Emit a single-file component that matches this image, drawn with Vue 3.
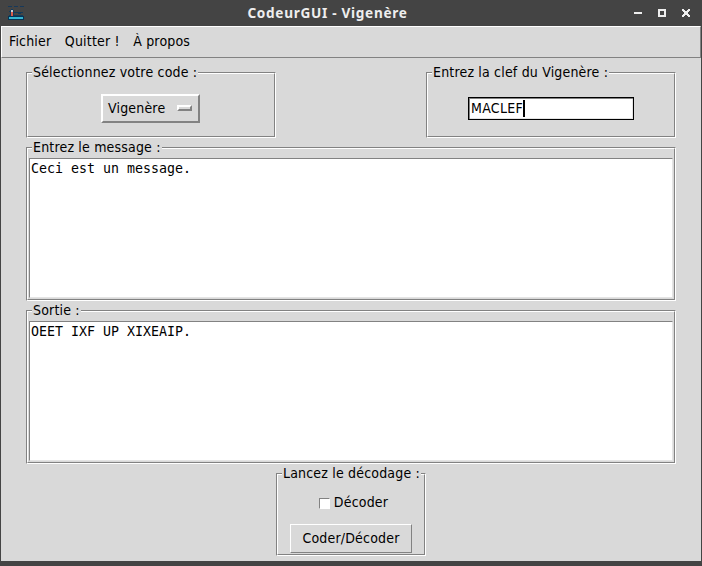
<script setup>
import { ref } from 'vue'

const menus = ['Fichier', 'Quitter !', 'À propos']
const code = ref('Vigenère')
const cipherKey = ref('MACLEF')
const message = ref('Ceci est un message.')
const output = ref('OEET IXF UP XIXEAIP.')
</script>

<template>
  <div class="window">
    <header class="titlebar">
      <svg class="logo" width="16" height="16" viewBox="0 0 16 16" shape-rendering="crispEdges">
        <path d="M0 1h4v1H0zM6 1h4v1H6zM12 1h4v1h-4z" fill="#17395a" />
        <path d="M1 6h2v1H1zM5 7h10v1H5zM10 8h3v1h-3zM1 10h14v1H1z" fill="#143a59" />
        <path d="M2 5h1v7H2zM5 5h1v7H5zM3 4h2v1H3z" fill="#123a5d" />
        <path d="M3 5h2v2H3z" fill="#c9d2d9" />
        <path d="M3 7h2v4H3z" fill="#d95b4a" />
        <path d="M0 11h16v4H0z" fill="#073455" />
        <path d="M1 12h14v2H1z" fill="#35b5d2" />
      </svg>
      <h1 class="title">CodeurGUI - Vigenère</h1>
      <svg class="controls" width="58" height="10" viewBox="0 0 58 10" shape-rendering="crispEdges">
        <path d="M0 4h8v2H0z" fill="#eee" />
        <path d="M24 1h8v8h-8zM26 3v4h4V3z" fill="#eee" fill-rule="evenodd" />
        <path d="M48 1h2v1h1v1h2V2h1V1h2v2h-1v1h-1v2h1v1h1v2h-2V8h-1V7h-2v1h-1v1h-2V7h1V6h1V4h-1V3h-1z" fill="#eee" />
      </svg>
    </header>
    <div class="body">
      <nav class="menubar">
        <span v-for="m in menus" :key="m">{{ m }}</span>
      </nav>
      <main class="content">
        <div class="top">
          <section class="group small">
            <span class="legend">Sélectionnez votre code :</span>
            <div class="option">{{ code }}<i class="indicator"></i></div>
          </section>
          <section class="group small">
            <span class="legend">Entrez la clef du Vigenère :</span>
            <div class="entry"><span>{{ cipherKey }}</span><i class="caret"></i></div>
          </section>
        </div>
        <section class="group wide">
          <span class="legend">Entrez le message :</span>
          <div class="text">{{ message }}</div>
        </section>
        <section class="group wide">
          <span class="legend">Sortie :</span>
          <div class="text">{{ output }}</div>
        </section>
        <section class="group launch">
          <span class="legend">Lancez le décodage :</span>
          <div class="check"><i class="box"></i><span>Décoder</span></div>
          <div class="button">Coder/Décoder</div>
        </section>
      </main>
    </div>
  </div>
</template>

<style>
body { background: #444; overflow: hidden; }
</style>

<style scoped>
* { box-sizing: border-box; }
.window {
  width: 702px;
  height: 566px;
  background: #444;
  padding: 0 1px 5px;
  display: flex;
  flex-direction: column;
  font: 14px/16px "DejaVu Sans Condensed", "DejaVu Sans", sans-serif;
  font-stretch: condensed;
  letter-spacing: 0.18px;
  color: #000;
}
.titlebar {
  height: 26px;
  display: grid;
  grid-template-columns: 68px 1fr 58px;
  align-items: center;
  padding: 0 9px 0 7px;
  flex: none;
}
.title {
  margin: 0 55px 0 0;
  text-align: center;
  font: bold 13.6px/18px "Noto Sans", sans-serif;
  letter-spacing: 0.7px;
  color: #eee;
}
.body { flex: 1; background: #d9d9d9; }
.menubar {
  height: 32px;
  border: 1px solid;
  border-color: #fff #828282 #828282 #fff;
  padding: 6px 7px 0;
  display: flex;
  gap: 13.5px;
  letter-spacing: 0.18px;
  white-space: pre;
}
.content {
  padding: 14px 25px 0;
  display: flex;
  flex-direction: column;
}
.top { display: flex; justify-content: space-between; margin-bottom: 9px; }
.group {
  position: relative;
  border: 1px solid;
  border-color: #828282 #fff #fff #828282;
  display: flex;
  flex-direction: column;
}
.group::before {
  content: "";
  position: absolute;
  inset: 0;
  border: 1px solid;
  border-color: #fff #828282 #828282 #fff;
}
.legend {
  position: relative;
  align-self: flex-start;
  margin: -9px 0 0 5px;
  padding: 0 1px;
  height: 16px;
  background: #d9d9d9;
  white-space: nowrap;
}
.small { width: 250px; height: 66px; align-items: center; }
.option {
  width: 99px;
  height: 29px;
  margin: 14px 1px 0 0;
  border: 2px solid;
  border-color: #fff #828282 #828282 #fff;
  padding: 4px 6px 5px 5px;
  display: flex;
  justify-content: space-between;
  align-items: center;
}
.indicator {
  width: 15px;
  height: 6px;
  border: 2px solid;
  border-color: #fff #828282 #828282 #fff;
}
.entry {
  width: 166px;
  height: 23px;
  margin-top: 17px;
  border: 1px solid #000;
  background: #fff;
  padding: 1px 2px 2px;
  display: flex;
  align-items: center;
  letter-spacing: 0.3px;
  box-shadow: inset 1px 1px #828282, inset -1px -1px #e4e4e4;
}
.entry span { margin-top: -1px; }
.caret { width: 2px; height: 17px; background: #000; }
.wide { height: 154px; margin-bottom: 9px; }
.text {
  position: relative;
  margin: 3px 2px 0;
  height: 140px;
  border: 1px solid;
  border-color: #828282 #e4e4e4 #e4e4e4 #828282;
  background: #fff;
  font: 13.29px/16px "DejaVu Sans Mono", monospace;
  letter-spacing: 0;
  padding: 2px 1px;
  white-space: pre-wrap;
}
.launch { width: 150px; height: 83px; align-self: center; align-items: center; }
.check { display: flex; align-items: center; gap: 4px; margin: 14px 0 0 5px; }
.check span { margin: -1px 0 1px; }
.box {
  width: 11px;
  height: 11px;
  background: #fff;
  border: 1px solid;
  border-color: #828282 #fff #fff #828282;
}
.button {
  width: 122px;
  height: 29px;
  margin-top: 13px;
  border: 1px solid;
  border-color: #fff #828282 #828282 #fff;
  text-align: center;
  line-height: 27px;
}
</style>
